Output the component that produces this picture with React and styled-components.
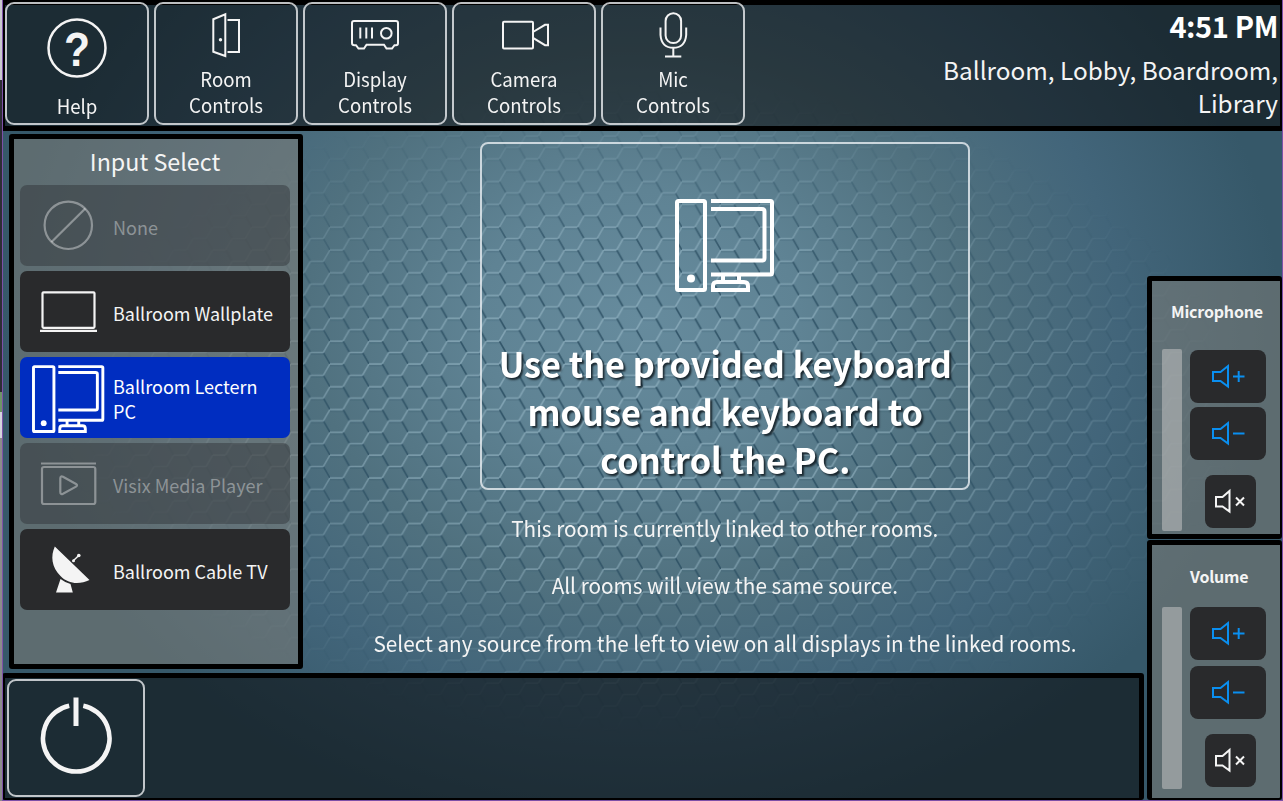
import React from "react";
import styled, { createGlobalStyle } from "styled-components";

const GlobalStyle = createGlobalStyle`
  * { box-sizing: border-box; }
  body { margin: 0; overflow: hidden; }
`;

const Screen = styled.div`
  position: relative;
  width: 1283px;
  height: 801px;
  display: flex;
  flex-direction: column;
  padding: 0 1px 1px 2px;
  overflow: hidden;
  color: #f4f4f4;
  font-family: "Noto Sans CJK SC", "Noto Sans", sans-serif;
  background:
    radial-gradient(ellipse 640px 520px at 640px 320px, #668b9d 0%, #5f8394 25%, #50717f 52%, #42657a 75%, #365869 100%);
`;

const Backdrop = styled.svg`
  position: absolute;
  inset: 0;
`;

const Edge = styled.div`
  position: absolute;
  inset: 0;
  border: solid #7d50a8;
  border-width: 0 1px 1px 0;
  &::before {
    content: "";
    position: absolute;
    left: 0;
    top: 0;
    width: 2px;
    height: 801px;
    border-right: 1px solid #7d50a8;
    background: linear-gradient(#c9c9cf 0 80px, #2d2d35 80px 392px, #6f9468 392px 412px, #d5d5de 412px 438px, #8c8c8c 438px);
  }
`;

const Header = styled.header`
  position: relative;
  height: 131px;
  display: flex;
  justify-content: space-between;
  border: solid #000;
  border-width: 5px 2px 5px 3px;
  background: rgba(2, 0, 0, 0.5);
`;

const Tools = styled.nav`
  display: flex;
  gap: 5px;
  margin-top: -3px;
`;

const OutlineButton = styled.button`
  display: flex;
  flex-direction: column;
  align-items: center;
  justify-content: space-between;
  width: ${(p) => p.$w}px;
  height: ${(p) => p.$h}px;
  padding: 0;
  border: 2px solid rgba(235, 238, 240, 0.8);
  border-radius: 9px;
  background: none;
  color: inherit;
  font-family: inherit;
`;

const ToolLabel = styled.span`
  font-size: 19.4px;
  line-height: 26px;
  width: 90px;
  margin: 0 0 ${(p) => p.$bottom ?? 5}px;
  transform: scaleX(0.96);
`;

const ToolIcon = styled.svg`
  margin-top: ${(p) => p.$top ?? 1}px;
  fill: none;
  stroke: #f4f4f4;
  stroke-width: 2;
`;

const Status = styled.div`
  width: 350px;
  padding: 4px 2px 0 0;
  text-align: right;
`;

const Clock = styled.div`
  font-size: 29px;
  line-height: 33px;
  font-weight: 700;
  letter-spacing: -0.4px;
  color: #fff;
`;

const Rooms = styled.div`
  margin-top: 11px;
  font-size: 24.35px;
  line-height: 33px;
  white-space: pre-line;
`;

const Body = styled.div`
  position: relative;
  flex: 1;
  display: flex;
  gap: 3px;
`;

const MainColumn = styled.div`
  width: 1142px;
  display: flex;
  flex-direction: column;
`;

const Workspace = styled.div`
  height: 542px;
  display: flex;
  padding: 3px 0 0 7px;
`;

const Panel = styled.section`
  border: 5px solid #000;
  border-radius: 3px;
  background: rgba(132, 128, 120, 0.5);
`;

const InputPanel = styled(Panel)`
  width: 294px;
  flex: none;
  height: 535px;
  padding: 0 8px 0 6px;
`;

const PanelTitle = styled.h2`
  margin: 0;
  height: 46px;
  font-size: 23.3px;
  line-height: 44px;
  font-weight: 400;
  text-align: center;
`;

const SourceList = styled.div`
  display: flex;
  flex-direction: column;
  gap: 5px;
`;

const sourceLook = {
  normal: ["#292a2c", "#f4f4f4"],
  active: ["#002dc0", "#ffffff"],
  disabled: ["rgba(40, 43, 47, 0.42)", "rgba(255, 255, 255, 0.38)"],
};

const Source = styled.button`
  display: flex;
  align-items: center;
  height: 81px;
  padding: 0;
  border: 0;
  border-radius: 7px;
  text-align: left;
  font: 18px/25px "Noto Sans CJK SC", "Noto Sans", sans-serif;
  background: ${(p) => sourceLook[p.$look][0]};
  color: ${(p) => sourceLook[p.$look][1]};
`;

const SourceIcon = styled.svg`
  flex: none;
  fill: none;
  stroke: currentColor;
  stroke-width: 2.2;
`;

const SourceName = styled.span`
  width: 170px;
  padding-top: 3px;
`;

const Stage = styled.main`
  width: 844px;
  flex: none;
  display: flex;
  flex-direction: column;
  align-items: center;
`;

const Prompt = styled.div`
  width: 490px;
  height: 348px;
  margin-top: 8px;
  padding-top: 54px;
  display: flex;
  flex-direction: column;
  align-items: center;
  border: 2px solid rgba(225, 232, 236, 0.85);
  border-radius: 8px;
`;

const PcPicture = styled.svg`
  width: 101px;
  height: 95px;
  margin-right: 1px;
`;

const PromptText = styled.p`
  margin: 46px 0 0 1px;
  font-size: 35px;
  line-height: 48px;
  font-weight: 700;
  color: #fff;
  text-align: center;
  white-space: pre;
  text-shadow: 2px 2px 2px rgba(15, 25, 30, 0.85);
  transform: scaleX(0.98);
`;

const Note = styled.p`
  margin: 0;
  font-size: 21.5px;
  line-height: 57.3px;
  white-space: nowrap;
  transform: scaleX(0.963);
`;

const Notes = styled.div`
  padding-top: 9px;
  display: flex;
  flex-direction: column;
  align-items: center;
`;

const Footer = styled.footer`
  flex: 1;
  border: solid #000;
  border-width: 5px 5px 2px 3px;
  border-radius: 3px;
  padding: 1px 2px;
  background: rgba(2, 0, 0, 0.5);
`;

const LevelColumn = styled.aside`
  width: 135px;
  padding-top: 145px;
  display: flex;
  flex-direction: column;
  gap: 1px;
`;

const LevelPanel = styled(Panel)`
  height: ${(p) => p.$h}px;
  border-width: 5px 2px ${(p) => p.$bottom}px 5px;
`;

const LevelTitle = styled.h3`
  margin: 0;
  padding: ${(p) => p.$pad}px 0 0 ${(p) => p.$left}px;
  height: ${(p) => p.$h}px;
  font-size: 16px;
  line-height: 22px;
  font-weight: 700;
  letter-spacing: -0.2px;
`;

const LevelBody = styled.div`
  display: flex;
  gap: 8px;
  padding-left: 10px;
`;

const Slider = styled.div`
  width: 20px;
  height: 182px;
  border-radius: 2px;
  background: rgba(195, 195, 195, 0.54);
`;

const Keys = styled.div`
  display: flex;
  flex-direction: column;
  align-items: center;
  padding-top: ${(p) => p.$top}px;
`;

const Key = styled.button`
  width: ${(p) => p.$w}px;
  height: 53px;
  margin: 0 0 ${(p) => p.$after}px ${(p) => p.$shift ?? 0}px;
  padding: 0;
  display: block;
  border: 0;
  border-radius: 8px;
  background: #292a2c;
  color: ${(p) => p.$color};
  svg { display: block; fill: none; stroke: currentColor; stroke-width: 2; }
`;

function HexBackdrop() {
  return (
    <Backdrop width="1283" height="801">
      <defs>
        <pattern id="hex" x="330" y="295.5" width="39.1" height="22.8" patternUnits="userSpaceOnUse">
          <g fill="none" strokeWidth="1.6">
            <path d="M13 0 19.55 11.4M32.5 11.4 39.1 22.8" stroke="#284b5f" strokeOpacity=".9" />
            <path d="M0 1.6H13M19.55 13H32.5" stroke="#284b5f" strokeOpacity=".2" />
            <path d="M0 .2H13M0 22.9H13M13 22.8 19.55 11.4H32.5L39.1 0" stroke="#a3c3d1" strokeOpacity=".55" />
          </g>
        </pattern>
        <radialGradient id="fade" gradientUnits="userSpaceOnUse" cx="0" cy="0" r="1" gradientTransform="translate(650 410) scale(590 325)">
          <stop offset="0" stopColor="#fff" />
          <stop offset=".5" stopColor="#fff" stopOpacity=".85" />
          <stop offset=".8" stopColor="#fff" stopOpacity=".3" />
          <stop offset="1" stopColor="#fff" stopOpacity="0" />
        </radialGradient>
        <mask id="hexmask">
          <rect width="1283" height="801" fill="url(#fade)" />
        </mask>
      </defs>
      <rect width="1283" height="801" fill="url(#hex)" mask="url(#hexmask)" />
    </Backdrop>
  );
}

function PcArt() {
  return (
    <g fill="none" stroke="#fff" strokeWidth="4">
      <rect x="3" y="3" width="28" height="89" rx="1.5" />
      <circle cx="17" cy="80.5" r="4" fill="#fff" stroke="none" />
      <path d="M37 3H96.500Q98 3 98 4.500V75Q98 76.500 96.500 76.500H37" />
      <path d="M37 11H88Q90.500 11 90.500 13.500V60Q90.500 62.500 88 62.500H37" />
      <path d="M49 77V83M65 77V83" />
      <path d="M39 92V88Q39 84 43 84H70Q74 84 74 88V92Z" />
    </g>
  );
}

const toolArt = {
  door: (
    <>
      <path d="M17.300 14.200 29.300 9.300V51L17.300 46.800Z" />
      <circle cx="24.500" cy="34.700" r="1.700" fill="#f4f4f4" stroke="none" />
      <path d="M31.500 15H43V47H31.500" />
    </>
  ),
  projector: (
    <>
      <path d="M9 16H51Q53 16 53 18V38Q53 40.200 51 40.200H49.500L47 43.500H41.500L39 39.800H21.500L19 43.500H13.500L11 40.200H9.500Q7 40.200 7 38V18Q7 16 9 16Z" />
      <path d="M15.300 22.500V33.500M21.300 22.500V33.500M27 22.500V33.500" />
      <circle cx="41.300" cy="28.200" r="5.300" />
    </>
  ),
  camera: (
    <>
      <rect x="9" y="16.800" width="30" height="26.600" rx="1" />
      <path d="M39 27 51 19.800H54V40.200H51L39 32.800" />
    </>
  ),
  mic: (
    <>
      <rect x="22.600" y="8.300" width="15.500" height="29.800" rx="7.700" />
      <path d="M17.500 22.500V30Q18.500 42.800 30.300 42.800T43.200 30V22.500M30.300 42.800V51M22 51.500H38.300" />
    </>
  ),
};

const sourceArt = {
  none: (
    <>
      <circle cx="48.300" cy="40.300" r="23.700" />
      <path d="M31.500 57 65.300 23.500" />
    </>
  ),
  laptop: (
    <>
      <rect x="22.500" y="21.300" width="52" height="35.500" rx="1" />
      <path d="M20 59.800H77" />
    </>
  ),
  pc: (
    <g transform="translate(11.300 7.400) scale(.73)">
      <PcArt />
    </g>
  ),
  media: (
    <>
      <path d="M21 20.500H76" />
      <rect x="22" y="24" width="53.300" height="37" rx="2" />
      <path d="M40.300 35.500Q40.300 32.500 43 33.800L56 41Q58 42.300 56 43.600L43 50.700Q40.300 52 40.300 49Z" />
    </>
  ),
  dish: (
    <g fill="currentColor" stroke="none">
      <path d="M34.800 17.500 69.500 51C60 55.500 48.500 55.500 40.500 47 31.500 38 30.500 27 34.800 17.500Z" />
      <path d="M40.500 50Q45 53.500 50.500 55L52.800 63.500H36Z" />
      <path d="M53 32 58.500 26.800" stroke="currentColor" strokeWidth="1.500" />
      <circle cx="58.800" cy="26.500" r="1.800" />
      <circle cx="53.500" cy="31.800" r="1.500" />
    </g>
  ),
};

const tools = [
  ["door", "Room Controls"],
  ["projector", "Display Controls"],
  ["camera", "Camera Controls"],
  ["mic", "Mic Controls"],
];

const sources = [
  ["none", "None", "disabled"],
  ["laptop", "Ballroom Wallplate", "normal"],
  ["pc", "Ballroom Lectern PC", "active"],
  ["media", "Visix Media Player", "disabled"],
  ["dish", "Ballroom Cable TV", "normal"],
];

function LevelKey({ sign, after }) {
  return (
    <Key $w={76} $after={after} $color="#0a8ff0">
      <svg width="76" height="53">
        <path d="M23 22H30.500L38 16V36.500L30.500 31H23Z" />
        <path d={sign === "+" ? "M43 26.500H54.500M48.700 21V32" : "M43 26.500H54.500"} />
      </svg>
    </Key>
  );
}

function Level({ title, left, pad, titleHeight, height, bottom, top, gaps }) {
  return (
    <LevelPanel $h={height} $bottom={bottom}>
      <LevelTitle $left={left} $pad={pad} $h={titleHeight}>{title}</LevelTitle>
      <LevelBody>
        <Slider />
        <Keys $top={top}>
          <LevelKey sign="+" after={gaps[0]} />
          <LevelKey sign="-" after={gaps[1]} />
          <Key $w={51} $after={0} $shift={5} $color="#f4f4f4">
            <svg width="51" height="53">
              <path d="M11 22H17.500L24.500 16V36.500L17.500 31.500H11Z" />
              <path d="M31 22.500 39 30.500M39 22.500 31 30.500" />
            </svg>
          </Key>
        </Keys>
      </LevelBody>
    </LevelPanel>
  );
}

export default function App() {
  return (
    <Screen>
      <GlobalStyle />
      <HexBackdrop />
      <Header>
        <Tools>
          <OutlineButton $w={144} $h={123}>
            <ToolIcon $top={12} width="64" height="64">
              <circle cx="32" cy="32" r="28.500" strokeWidth="2.500" />
              <text x="32" y="49.500" textAnchor="middle" fill="#f4f4f4" stroke="none" fontFamily="Liberation Sans, sans-serif" fontWeight="700" fontSize="48" textLength="26" lengthAdjust="spacingAndGlyphs">?</text>
            </ToolIcon>
            <ToolLabel $bottom={4}>Help</ToolLabel>
          </OutlineButton>
          {tools.map(([icon, label]) => (
            <OutlineButton key={icon} $w={144} $h={123}>
              <ToolIcon width="60" height="60">{toolArt[icon]}</ToolIcon>
              <ToolLabel>{label}</ToolLabel>
            </OutlineButton>
          ))}
        </Tools>
        <Status>
          <Clock>4:51 PM</Clock>
          <Rooms>{"Ballroom, Lobby, Boardroom,\nLibrary"}</Rooms>
        </Status>
      </Header>
      <Body>
        <MainColumn>
          <Workspace>
            <InputPanel>
              <PanelTitle>Input Select</PanelTitle>
              <SourceList>
                {sources.map(([icon, name, look]) => (
                  <Source key={icon} $look={look}>
                    <SourceIcon width="93" height="81">{sourceArt[icon]}</SourceIcon>
                    <SourceName>{name}</SourceName>
                  </Source>
                ))}
              </SourceList>
            </InputPanel>
            <Stage>
              <Prompt>
                <PcPicture><PcArt /></PcPicture>
                <PromptText>{"Use the provided keyboard\nmouse and keyboard to\ncontrol the PC."}</PromptText>
              </Prompt>
              <Notes>
                <Note>This room is currently linked to other rooms.</Note>
                <Note>All rooms will view the same source.</Note>
                <Note>Select any source from the left to view on all displays in the linked rooms.</Note>
              </Notes>
            </Stage>
          </Workspace>
          <Footer>
            <OutlineButton $w={138} $h={118}>
              <svg width="134" height="114" fill="none" stroke="#f4f4f4" strokeWidth="4.600">
                <path d="M60.200 24.700A33.300 33.300 0 1 0 74.300 24.700" />
                <path d="M67 16.500V45" strokeWidth="5" />
              </svg>
            </OutlineButton>
          </Footer>
        </MainColumn>
        <LevelColumn>
          <Level title="Microphone" left={19} pad={19} titleHeight={68} height={263} bottom={5} top={1} gaps={[4, 15]} />
          <Level title="Volume" left={38} pad={20} titleHeight={62} height={260} bottom={2} top={0} gaps={[6, 15]} />
        </LevelColumn>
      </Body>
      <Edge />
    </Screen>
  );
}
